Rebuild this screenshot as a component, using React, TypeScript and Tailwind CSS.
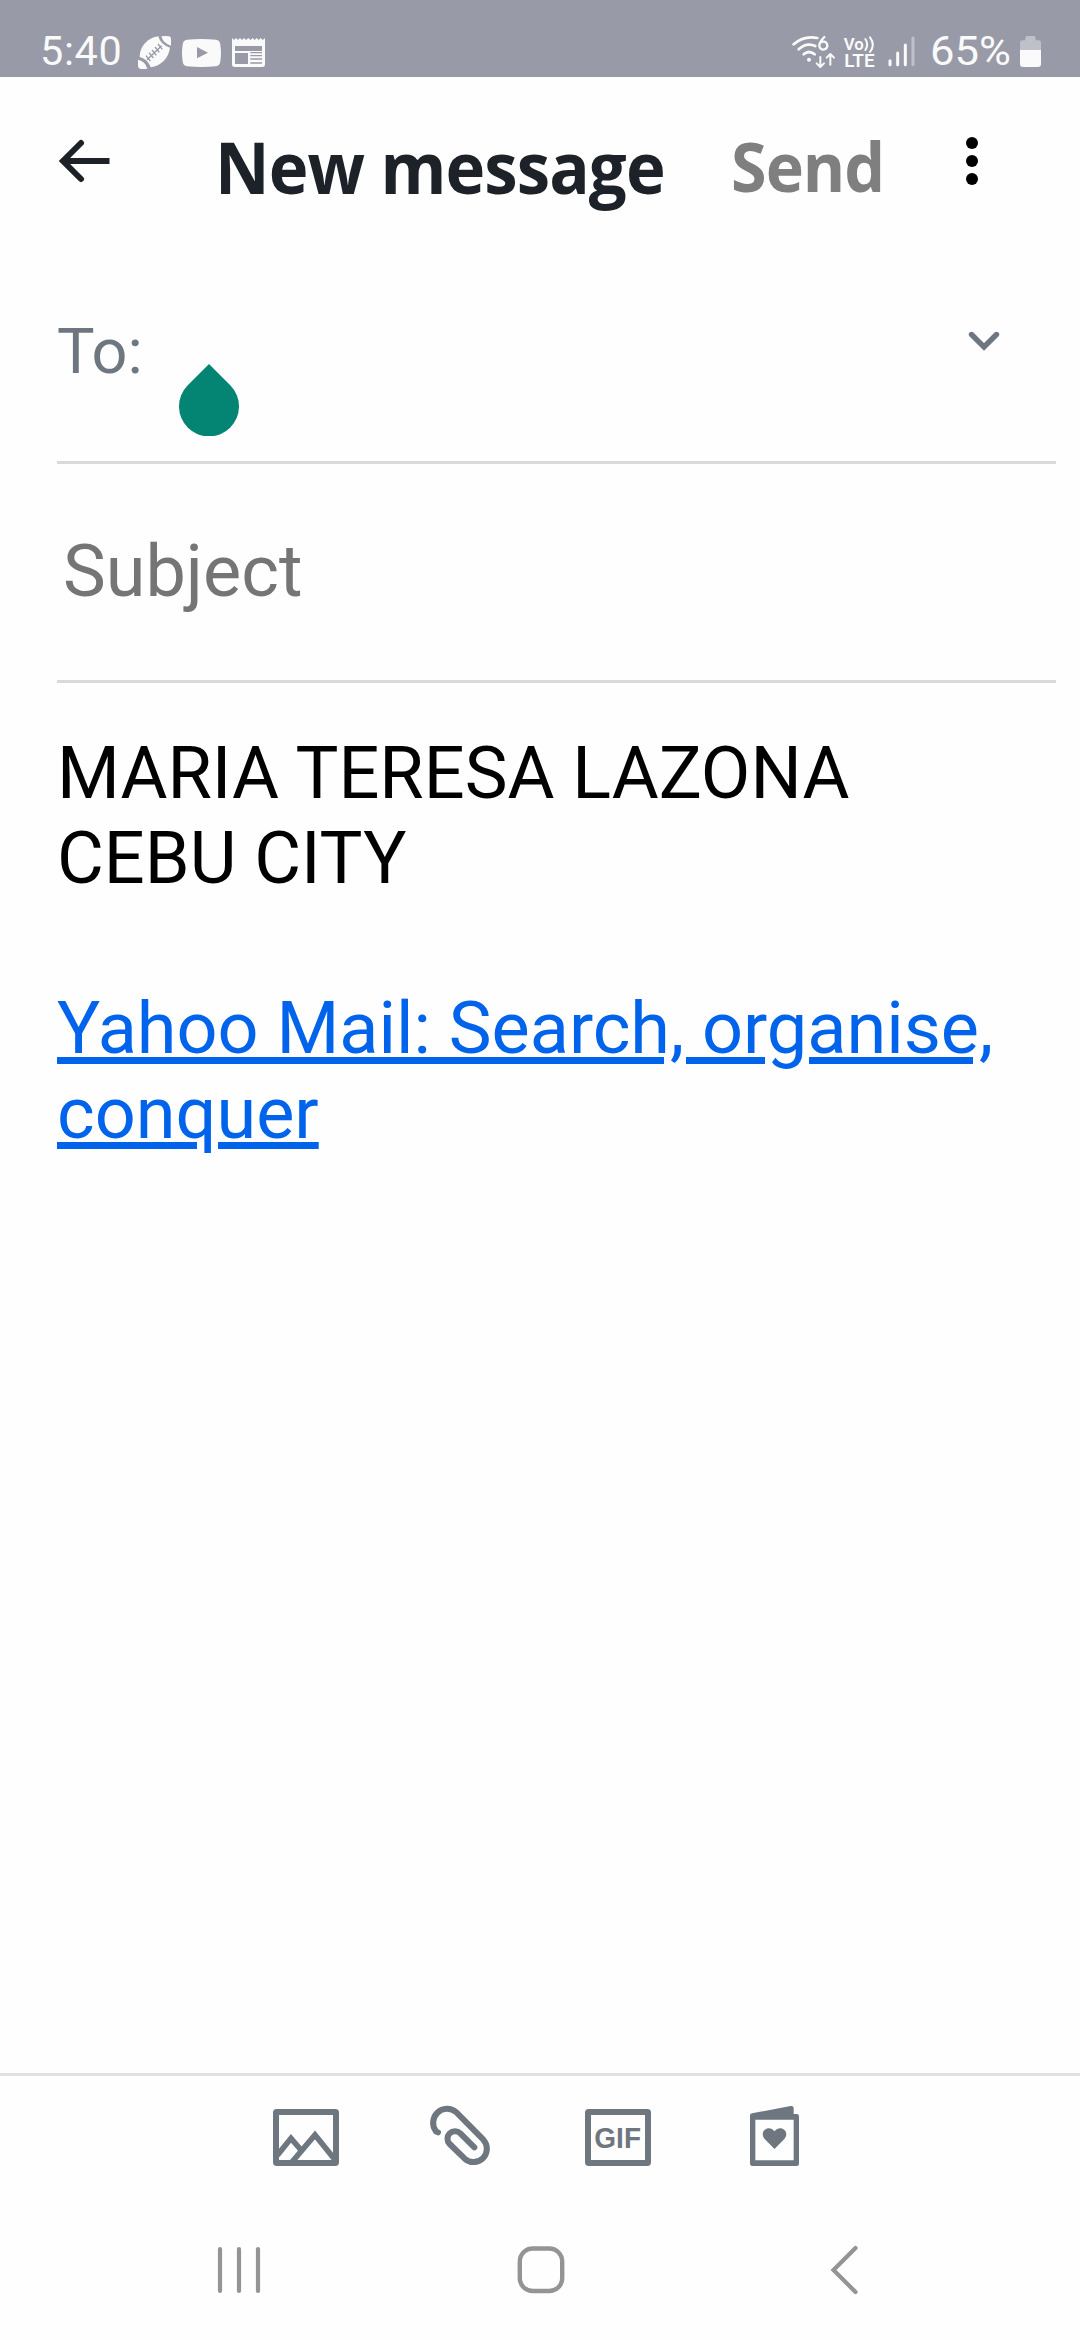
import React from 'react';

function StatusBar() {
  return (
    <div className="flex h-[77px] items-start bg-[#989ba7] pl-[40px] font-['Roboto',sans-serif] text-[#fafafa]">
      <span className="mt-[32px] w-[97px] origin-left scale-x-[1.035] text-[40px] leading-[40px] tracking-[0.6px]">5:40</span>

      {/* Football */}
      <svg className="mt-[35px] h-[35px] w-[35px]" viewBox="0 0 105 105" fill="none">
        <path d="M8 66C8 34 33 7 64 4Q70 29 99 38C95 69 72 93 41 97Q33 73 8 66Z" fill="#fafafa" />
        <path d="M73 4Q85 2 96 4Q102 5 102 12V32Q79 26 73 4Z" fill="#fafafa" />
        <path d="M3 74Q25 79 31 101Q20 103 9 101Q3 100 3 93Z" fill="#fafafa" />
        <path d="M30 74L74 32M27 62L40 78M36 53L49 69M45 45L58 61M54 36L67 52M63 27L76 43" stroke="#989ba7" strokeWidth="4" />
      </svg>

      {/* YouTube */}
      <svg className="mt-[39px] ml-[10px] h-[28px] w-[39px]" viewBox="0 0 117 84">
        <path d="M15 2Q58-2 102 2Q114 4 115 17Q119 42 115 67Q114 80 102 82Q58 86 15 82Q3 80 2 67Q-2 42 2 17Q3 4 15 2Z" fill="#fafafa" />
        <path d="M45 24L78 41L45 58Z" fill="#989ba7" />
      </svg>

      {/* Newspaper */}
      <svg className="mt-[38px] ml-[11px] h-[29px] w-[33px]" viewBox="0 0 99 87">
        <path d="M0 0L6 6L12 0L18 6L24 0L30 6L36 0L42 6L49 0L56 6L62 0L68 6L74 0L80 6L86 0L92 6L99 0V79Q99 87 91 87H8Q0 87 0 79Z" fill="#fafafa" />
        <path d="M9 24H90V39H9ZM9 45H48V78H9ZM55 42H90V46H55ZM55 51H90V55H55ZM55 61H90V65H55ZM55 73H90V77H55Z" fill="#989ba7" />
      </svg>

      {/* Wi-Fi 6 */}
      <svg className="mt-[34px] ml-[526px] h-[36px] w-[46px]" viewBox="93 102 138 108" fill="none" stroke="#fafafa" strokeLinecap="round">
        <path d="M101 133Q131 106 172 114" strokeWidth="8" />
        <path d="M116 148Q139 126 166 138" strokeWidth="8" />
        <path d="M131 163Q147 149 164 163" strokeWidth="8" />
        <circle cx="147" cy="179" r="6" fill="#fafafa" stroke="none" />
        <path d="M193 111Q178 126 178 137A12 12 0 1 0 183 127" strokeWidth="7" />
        <path d="M181 171V200M170 190L181 201L192 190M211 194V163M200 173L211 162L222 173" strokeWidth="6" strokeLinejoin="round" />
      </svg>

      {/* VoLTE */}
      <svg className="mt-[34px] ml-[6px] h-[36px] w-[33px]" viewBox="250 102 99 108" fill="none">
        <text x="252" y="149" textLength="60" lengthAdjust="spacingAndGlyphs" fill="#fafafa" className="text-[50px] font-semibold">Vo</text>
        <path d="M317 117Q328 133 317 150M331 112Q348 134 331 156" stroke="#fafafa" strokeWidth="6" strokeLinecap="round" />
        <text x="254" y="202" textLength="91" lengthAdjust="spacingAndGlyphs" fill="#fafafa" className="text-[53px] font-semibold">LTE</text>
      </svg>

      {/* Signal */}
      <svg className="mt-[36px] ml-[12px] h-[31px] w-[28px]" viewBox="384 108 84 93" stroke="#fafafa" strokeWidth="9" strokeLinecap="round">
        <path d="M390 182V194M413 159V194M436 135V194" />
        <path d="M459 114V194" opacity=".4" />
      </svg>

      <span className="mt-[32px] ml-[14px] w-[84px] origin-left scale-x-[1.09] text-[40px] leading-[40px]">65%</span>

      {/* Battery */}
      <svg className="mt-[36px] ml-[6px] h-[31px] w-[21px] shrink-0" viewBox="0 0 63 93" fill="#fafafa">
        <path d="M0 42V20Q0 13 7 13H16V6Q16 0 22 0H41Q47 0 47 6V13H56Q63 13 63 20V42Z" opacity=".4" />
        <path d="M0 42H63V84Q63 93 54 93H9Q0 93 0 84Z" />
      </svg>
    </div>
  );
}

function Header() {
  return (
    <header className="flex h-[231px] items-start font-['Open_Sans',sans-serif] font-bold">
      <svg className="mt-[60px] ml-[56px] h-[48px] w-[56px]" viewBox="0 0 56 48" fill="none" stroke="#1d2228" strokeWidth="6">
        <path d="M25 6L7 24L25 42" strokeLinecap="round" />
        <path d="M6 24H53.5" />
      </svg>
      <h1 className="mt-[53px] ml-[103px] w-[516px] origin-left scale-x-[0.933] text-[72px] leading-[72px] tracking-[-1px] whitespace-nowrap text-[#1d2228]">New message</h1>
      <button className="mt-[55px] w-[228px] origin-left scale-x-[0.95] text-left text-[68px] leading-[68px] font-bold tracking-[-1px] text-[#7f7f7f]">Send</button>
      <svg className="mt-[60px] ml-[7px] h-[48px] w-[12px]" viewBox="0 0 12 48">
        <circle cx="6" cy="6" r="6" />
        <circle cx="6" cy="24" r="6" />
        <circle cx="6" cy="42" r="6" />
      </svg>
    </header>
  );
}

function Toolbar() {
  return (
    <div className="flex h-[134px] items-start border-t-[3px] border-[#dfe2e5] pl-[273px] text-[#6e7780]">
      {/* Photo */}
      <svg className="mt-[33px] h-[57px] w-[66px]" viewBox="99 147 198 171" fill="none" stroke="currentColor" strokeWidth="18">
        <rect x="108" y="156" width="180" height="153" rx="2" />
        <path d="M112 286L153 235L183 270M156 306L225 225L285 299" strokeWidth="17" />
      </svg>

      {/* Attachment */}
      <svg className="mt-[28px] ml-[89px] h-[64px] w-[64px]" viewBox="564 132 192 192" fill="none" stroke="currentColor" strokeWidth="18" strokeLinecap="round">
        <path d="M594 217L588 214A42 42 0 0 1 648 156L730 239A40 40 0 0 1 674 296L629 252A22.5 22.5 0 0 1 661 220L703 262" />
      </svg>

      {/* GIF */}
      <svg className="mt-[33px] ml-[93px] h-[57px] w-[66px]" viewBox="75 147 198 171" fill="none">
        <rect x="84" y="156" width="180" height="153" rx="2" stroke="currentColor" strokeWidth="18" />
        <text x="103" y="264" textLength="140" lengthAdjust="spacingAndGlyphs" fill="currentColor" className="font-['Liberation_Sans',sans-serif] text-[87px] font-bold">GIF</text>
      </svg>

      {/* Greeting card */}
      <svg className="mt-[30px] ml-[99px] h-[60px] w-[49px]" viewBox="570 138 147 180" fill="currentColor">
        <path fillRule="evenodd" d="M570 166Q570 161 576 160L692 138Q701 137 701 145V162H710Q717 162 717 169V311Q717 318 710 318H577Q570 318 570 311ZM586 179V301H701V179Z" />
        <path d="M643.500 267L614 237C595 214 627 192 643.500 214C660 192 692 214 673 237Z" />
      </svg>
    </div>
  );
}

function NavBar() {
  return (
    <nav className="flex h-[133px] items-start pt-[37px]">
      <svg className="ml-[216px] h-[52px] w-[48px]" viewBox="0 0 48 52" stroke="#949494" strokeWidth="4.200" strokeLinecap="round">
        <path d="M4 5V47M23 5V47M42 5V47" />
      </svg>
      <svg className="ml-[251px] h-[52px] w-[52px]" viewBox="0 0 52 52" fill="none" stroke="#949494" strokeWidth="4.400">
        <rect x="4.800" y="4.500" width="42.400" height="42.500" rx="13" />
      </svg>
      <svg className="ml-[261px] h-[52px] w-[32px]" viewBox="0 0 32 52" fill="none" stroke="#949494" strokeWidth="4.200" strokeLinecap="round">
        <path d="M27.500 4L5.500 26L27.500 48" />
      </svg>
    </nav>
  );
}

export default function App() {
  return (
    <div className="flex h-[2340px] w-[1080px] flex-col overflow-hidden bg-[#fefefe]">
      <StatusBar />
      <Header />

      <div className="mr-[24px] ml-[57px] flex h-[156px] items-start border-b-[3px] border-[#d8dadd] font-['Roboto',sans-serif]">
        <span className="mt-[12px] w-[122px] text-[63px] leading-[64px] text-[#6e7780]">To:</span>
        {/* Text cursor handle */}
        <svg className="mt-[56px] h-[72px] w-[60px]" viewBox="0 0 60 72" fill="#048574">
          <path d="M30 0L51.500 21.500A30 30 0 1 1 8.500 21.500Z" />
        </svg>
        <svg className="mt-[20px] mr-[54px] ml-auto h-[28px] w-[36px]" viewBox="0 0 36 28" fill="none" stroke="#6e7780" strokeWidth="5.400" strokeLinecap="round">
          <path d="M5.500 6.500L18 19L30.500 6.500" />
        </svg>
      </div>

      <div className="mr-[24px] ml-[57px] h-[219px] border-b-[3px] border-[#d8dadd] pt-[72px] pl-[6px] font-['Roboto',sans-serif] text-[72px] leading-[72px] text-[#757575]">
        Subject
      </div>

      <div className="flex-1 pt-[48px] pl-[57px] font-['Roboto',sans-serif] text-[72px] leading-[85.200px] text-black">
        <p>MARIA TERESA LAZONA</p>
        <p>CEBU CITY</p>
        <p className="mt-[84.400px] w-[980px] text-[#0063eb] underline decoration-[7px] underline-offset-[4px]">
          Yahoo Mail: Search, organise, conquer
        </p>
      </div>

      <Toolbar />
      <NavBar />
    </div>
  );
}
